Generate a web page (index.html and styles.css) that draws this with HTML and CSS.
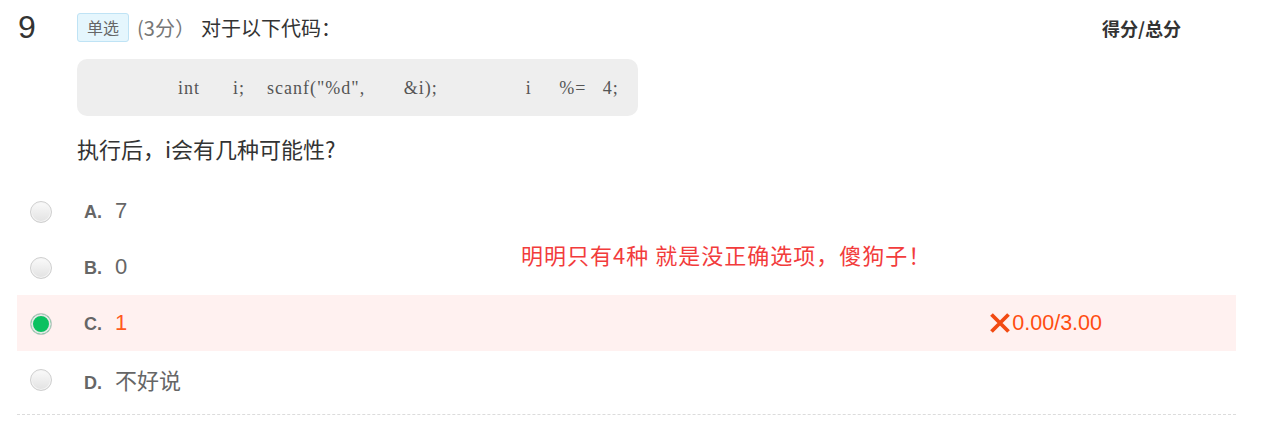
FILE: index.html
```html
<!DOCTYPE html>
<html lang="zh">
<head>
<meta charset="utf-8">
<link rel="stylesheet" href="styles.css">
</head>
<body>
<div class="question">
  <div class="head">
    <div class="num">9</div>
    <span class="tag">单选</span>
    <span class="pts">(3分）</span>
    <span class="title">对于以下代码：</span>
    <span class="score-head">得分/总分</span>
  </div>
  <div class="body">
    <div class="code">int      i;    scanf("%d",       &amp;i);                i     %=   4;</div>
    <div class="ask">执行后，i会有几种可能性?</div>
  </div>
  <div class="options">
    <div class="opt">
      <span class="radio"></span><span class="label"><span class="letter">A.</span><span class="val">7</span></span>
    </div>
    <div class="opt">
      <span class="radio"></span><span class="label"><span class="letter">B.</span><span class="val">0</span></span>
    </div>
    <div class="opt wrong">
      <span class="radio on"></span><span class="label"><span class="letter">C.</span><span class="val">1</span></span>
      <span class="score">
        <svg class="xicon" width="22" height="22" viewBox="0 0 22 22"><path d="M2.5 2.5 L19.5 19.5 M19.5 2.5 L2.5 19.5" stroke="#f24a12" stroke-width="3.8" fill="none"/></svg>0.00/3.00
      </span>
    </div>
    <div class="opt">
      <span class="radio"></span><span class="label"><span class="letter">D.</span><span class="val">不好说</span></span>
    </div>
    <div class="note">明明只有4种 就是没正确选项，傻狗子！</div>
  </div>
  <div class="sep"></div>
</div>
</body>
</html>
```

FILE: styles.css
```css
html, body {
  margin: 0;
  padding: 0;
  background: #fff;
}
body {
  font-family: "Liberation Sans", "Noto Sans CJK SC", sans-serif;
  color: #333;
}
.question {
  margin-left: 17px;
  width: 1219px;
  padding-top: 13px;
}
.head {
  display: flex;
  align-items: center;
  height: 29px;
}
.num {
  width: 60px;
  font-size: 32px;
  line-height: 29px;
  color: #333;
  padding-left: 1px;
  box-sizing: border-box;
}
.tag {
  box-sizing: border-box;
  height: 29px;
  line-height: 27px;
  padding: 0 9px;
  border: 1px solid #bfe3f5;
  border-radius: 3px;
  background: #e5f6fd;
  color: #666;
  font-size: 16px;
  font-family: "Noto Sans CJK SC", sans-serif;
}
.pts {
  margin-left: 8px;
  font-size: 20px;
  color: #777;
  font-family: "Noto Sans CJK SC", sans-serif;
}
.title {
  margin-left: 6px;
  font-size: 20px;
  color: #333;
  font-family: "Noto Sans CJK SC", sans-serif;
}
.score-head {
  margin-left: auto;
  margin-right: 55px;
  font-size: 18px;
  font-weight: bold;
  color: #333;
  font-family: "Noto Sans CJK SC", sans-serif;
}
.body {
  padding-left: 60px;
}
.code {
  margin-top: 17px;
  width: 561px;
  height: 57px;
  box-sizing: border-box;
  background: #eeeeee;
  border-radius: 10px;
  padding-left: 101px;
  font-family: "Liberation Serif", serif;
  font-size: 18px;
  letter-spacing: 1px;
  line-height: 58px;
  color: #555;
  white-space: pre;
}
.ask {
  margin-top: 16px;
  font-size: 22px;
  line-height: 32px;
  color: #333;
  font-family: "Noto Sans CJK SC", sans-serif;
}
.options {
  position: relative;
  margin-top: 19px;
}
.opt {
  display: flex;
  align-items: center;
  height: 56px;
}
.opt.wrong {
  background: #fff1f0;
}
.radio {
  box-sizing: border-box;
  width: 22px;
  height: 22px;
  margin-left: 13px;
  margin-top: 2px;
  border-radius: 50%;
  border: 1px solid #cfcfcf;
  background: linear-gradient(#fafafa, #e2e2e2);
  box-shadow: inset 0 0 0 1px #f4f4f4;
}
.radio.on {
  border: 1px solid #c8c8c8;
  background: #0bc160;
  box-shadow: inset 0 0 0 2px #e6e6e6;
}
.label {
  display: flex;
  align-items: baseline;
  margin-left: 32px;
}
.letter {
  width: 31px;
  font-size: 18px;
  font-weight: bold;
  color: #666;
}
.val {
  font-size: 22px;
  color: #666;
  font-family: "Liberation Sans", "Noto Sans CJK SC", sans-serif;
}
.wrong .val {
  color: #ff5a1e;
}
.score {
  margin-left: auto;
  margin-right: 134px;
  display: flex;
  align-items: center;
  font-size: 21.5px;
  color: #ff4d12;
}
.xicon {
  margin-right: 1px;
}
.note {
  position: absolute;
  left: 504px;
  top: 56px;
  font-size: 22px;
  letter-spacing: 1px;
  line-height: 30px;
  color: #f23c3c;
  font-family: "Noto Sans CJK SC", sans-serif;
}
.sep {
  margin-top: 7px;
  border-top: 1px dashed #dcdcdc;
}
```
